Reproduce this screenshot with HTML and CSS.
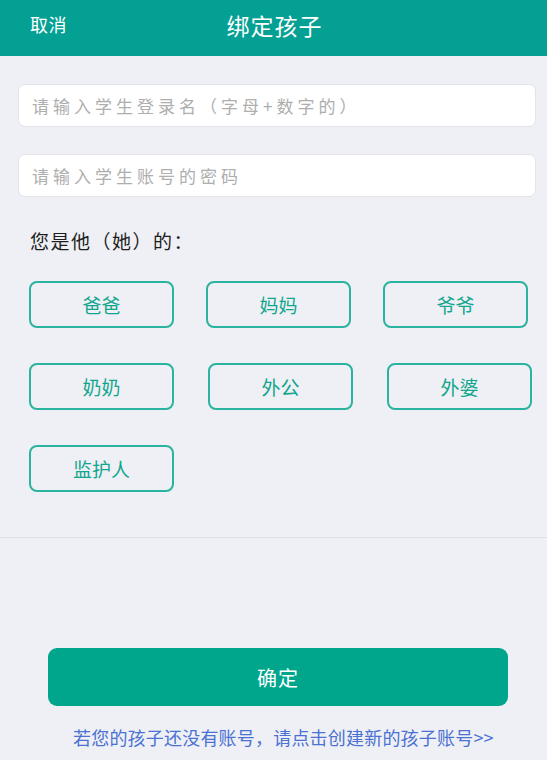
FILE: index.html
```html
<!DOCTYPE html>
<html lang="zh-CN">
<head>
<meta charset="utf-8">
<title>绑定孩子</title>
<link rel="stylesheet" href="styles.css">
</head>
<body>
<header class="topbar">
  <span class="cancel">取消</span>
  <h1 class="title">绑定孩子</h1>
</header>
<main class="content">
  <form class="form">
    <input class="field" type="text" placeholder="请输入学生登录名（字母+数字的）">
    <input class="field" type="password" placeholder="请输入学生账号的密码">
  </form>
  <p class="label">您是他（她）的：</p>
  <div class="choices">
    <div class="row row-a">
      <button class="choice" type="button">爸爸</button>
      <button class="choice" type="button">妈妈</button>
      <button class="choice" type="button">爷爷</button>
    </div>
    <div class="row row-b">
      <button class="choice" type="button">奶奶</button>
      <button class="choice" type="button">外公</button>
      <button class="choice" type="button">外婆</button>
    </div>
    <div class="row row-c">
      <button class="choice" type="button">监护人</button>
    </div>
  </div>
  <hr class="divider">
  <div class="footer">
    <button class="confirm" type="button">确定</button>
    <a class="create-link" href="#">若您的孩子还没有账号，请点击创建新的孩子账号&gt;&gt;</a>
  </div>
</main>
</body>
</html>
```

FILE: styles.css
```css
* {
  box-sizing: border-box;
}

html, body {
  margin: 0;
  padding: 0;
}

body {
  width: 547px;
  height: 760px;
  overflow: hidden;
  background: #eff0f5;
  font-family: "Noto Sans CJK SC", "Noto Sans", sans-serif;
  color: #222;
}

.topbar {
  position: relative;
  height: 56px;
  background: #04a093;
  display: flex;
  align-items: center;
  justify-content: center;
  padding-bottom: 6px;
}

.cancel {
  position: absolute;
  left: 30px;
  top: 11px;
  font-size: 18px;
  line-height: 26px;
  color: #fff;
  letter-spacing: 0.5px;
}

.title {
  margin: 0 0 0 2px;
  font-size: 23px;
  font-weight: 400;
  line-height: 30px;
  color: #fff;
  letter-spacing: 1px;
}

.content {
  display: flex;
  flex-direction: column;
}

.form {
  display: flex;
  flex-direction: column;
  gap: 27px;
  padding: 28px 11px 0 18px;
  margin: 0;
}

.field {
  display: block;
  width: 518px;
  height: 43px;
  margin: 0;
  padding: 0 13px;
  border: 1px solid #e3e4e8;
  border-radius: 7px;
  background: #fff;
  font-family: inherit;
  font-size: 17px;
  letter-spacing: 4px;
  color: #333;
  outline: none;
}

.field::placeholder {
  color: #aeaeae;
}

.label {
  margin: 30px 0 0 30px;
  font-size: 19px;
  line-height: 28px;
  letter-spacing: 1.5px;
  color: #1e1e1e;
}

.choices {
  display: flex;
  flex-direction: column;
  gap: 35px;
  margin-top: 26px;
  padding-left: 29px;
}

.row {
  display: flex;
}

.row-a {
  gap: 32px;
}

.row-b {
  gap: 34px;
}

.choice {
  width: 145px;
  height: 47px;
  margin: 0;
  padding: 0;
  border: 2px solid #2ab39f;
  border-radius: 8px;
  background: transparent;
  font-family: inherit;
  font-size: 19px;
  font-weight: 400;
  color: #11a68d;
  cursor: pointer;
}

.divider {
  margin: 45px 0 0;
  height: 1px;
  border: 0;
  background: #dfe0e4;
}

.footer {
  display: flex;
  flex-direction: column;
  align-items: flex-start;
  padding-top: 110px;
}

.confirm {
  width: 460px;
  height: 58px;
  margin: 0 0 0 48px;
  border: 0;
  border-radius: 9px;
  background: #00a68c;
  font-family: inherit;
  font-size: 20px;
  color: #fff;
  letter-spacing: 1px;
}

.create-link {
  margin: 19px 0 0 73px;
  font-size: 18px;
  line-height: 24px;
  letter-spacing: 0.2px;
  color: #4b72d2;
  text-decoration: none;
  white-space: nowrap;
}
```
